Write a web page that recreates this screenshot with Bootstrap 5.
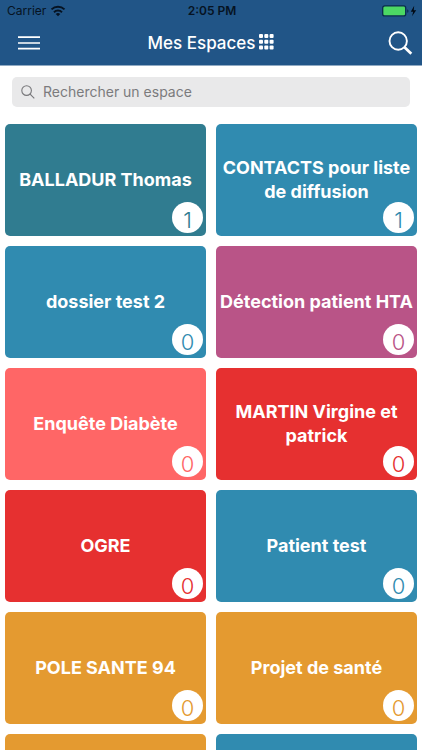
<!DOCTYPE html>
<html lang="fr">
<head>
<meta charset="utf-8">
<meta name="viewport" content="width=device-width, initial-scale=1">
<title>Mes Espaces</title>
<link href="https://cdn.jsdelivr.net/npm/bootstrap@5.3.0/dist/css/bootstrap.min.css" rel="stylesheet">
<style>
body { font-family: Inter, "Liberation Sans", sans-serif; }
svg { display: block; }
.app-header { background: #215587; border-bottom: 1px solid #90aac3; }
.status-bar { color: #061322; font-size: 12px; line-height: 16px; padding: 3px 5px 3px 7px; }
.status-bar > * { flex: 1 1 0; }
.title-bar { height: 43px; padding: 0 9px 1px; }
.title-bar > * { flex: 1 1 0; }
.title-bar > .app-title { flex: 0 0 auto; }
.app-title { font-size: 17px; line-height: 24px; }
.search-area { padding: 11px 12px 17px; }
.search-field { background: #e9e9ea; border-radius: 5px; height: 30px; padding: 0 9px; gap: 8px; }
.search-field input { font-size: 14px; line-height: 20px; color: #555; }
.search-field input::placeholder { color: #7b7b7d; opacity: 1; }
.space-list { scrollbar-width: none; }
.space-list::-webkit-scrollbar { display: none; }
.space-grid { display: grid; grid-template-columns: repeat(2, minmax(0, 1fr)); grid-auto-rows: 112px; gap: 10px; padding: 0 5px 10px; }
.space-tile { background: var(--tile); border: 0; border-radius: 5px; color: #fff; font-size: 18px; line-height: 24px; font-weight: 700; padding: 0 2px; }
.space-count { right: 3px; bottom: 3px; width: 31px; height: 31px; padding-top: 5px; color: var(--tile); font-size: 22px; line-height: 26px; font-weight: 300; }
.tile-teal { --tile: #307c90; }
.tile-blue { --tile: #308bb0; }
.tile-plum { --tile: #b95487; }
.tile-coral { --tile: #ff6666; }
.tile-red { --tile: #e63030; }
.tile-amber { --tile: #e49a30; }
</style>
</head>
<body>
<div class="d-flex flex-column vh-100 overflow-hidden bg-white">
  <header class="app-header flex-shrink-0">
    <div class="status-bar d-flex align-items-center">
      <div class="d-flex align-items-center gap-1">
        <span>Carrier</span>
        <svg width="16" height="12" viewBox="0 0 16 12" fill="none" stroke="currentColor" stroke-width="2" aria-hidden="true"><path d="M1.5 4.4a9.4 9.4 0 0 1 13 0M4 7.2a5.8 5.8 0 0 1 8 0"/><path d="M8 11.3 5.7 9.1a3.4 3.4 0 0 1 4.6 0z" fill="currentColor" stroke="none"/></svg>
      </div>
      <div class="text-center fw-semibold">2:05 PM</div>
      <div class="d-flex justify-content-end">
        <svg width="36" height="12" viewBox="0 0 36 12" aria-hidden="true"><rect x="1.7" y=".9" width="23" height="10" rx="2" fill="#4cd964" stroke="#0a2c4c" stroke-width="1.3"/><path d="M26.2 4.2q1.3.4 1.3 1.8t-1.3 1.8z" fill="#0a2c4c"/><path d="M33.2.8 29.8 6.8h2.4L31 11.2l4.2-6h-2.5z" fill="#020a14"/></svg>
      </div>
    </div>
    <div class="title-bar d-flex align-items-center">
      <div>
        <button type="button" class="btn d-block p-0 border-0 ms-2" aria-label="Menu">
          <svg width="23" height="14" viewBox="0 0 23 14" stroke="#fff" stroke-width="1.7"><path d="M1 1.2h22M1 7h22M1 12.6h22"/></svg>
        </button>
      </div>
      <div class="app-title d-flex align-items-center gap-1 text-white">
        <h1 class="app-title fw-medium m-0">Mes Espaces</h1>
        <svg width="15" height="19" viewBox="0 0 15 19" fill="#fff" aria-hidden="true"><rect width="4" height="4" rx="1"/><rect x="5.3" width="4" height="4" rx="1"/><rect x="10.6" width="4" height="4" rx="1"/><rect y="5.7" width="4" height="4" rx="1"/><rect x="5.3" y="5.7" width="4" height="4" rx="1"/><rect x="10.6" y="5.7" width="4" height="4" rx="1"/><rect y="11.4" width="4" height="4" rx="1"/><rect x="5.3" y="11.4" width="4" height="4" rx="1"/><rect x="10.6" y="11.4" width="4" height="4" rx="1"/></svg>
      </div>
      <div class="d-flex justify-content-end">
        <button type="button" class="btn d-block p-0 border-0" aria-label="Rechercher">
          <svg width="25" height="24" viewBox="0 0 25 24" fill="none" stroke="#fff"><circle cx="10.2" cy="10" r="8.7" stroke-width="1.9"/><path d="m16.5 16.2 6.8 6.6" stroke-width="2.8"/></svg>
        </button>
      </div>
    </div>
  </header>
  <main class="space-list flex-grow-1 overflow-auto">
    <div class="search-area">
      <label class="search-field d-flex align-items-center">
        <svg width="14" height="14" viewBox="0 0 14 14" fill="none" stroke="#77777a" stroke-width="1.1" aria-hidden="true"><circle cx="5.6" cy="5.6" r="4.8"/><path d="m9.1 9.1 4.2 4.2"/></svg>
        <input type="search" class="border-0 bg-transparent p-0 flex-grow-1" placeholder="Rechercher un espace" aria-label="Rechercher un espace">
      </label>
    </div>
    <div class="space-grid">
      <button type="button" class="space-tile tile-teal position-relative">BALLADUR Thomas<span class="space-count position-absolute rounded-circle bg-white">1</span></button>
      <button type="button" class="space-tile tile-blue position-relative">CONTACTS pour liste de diffusion<span class="space-count position-absolute rounded-circle bg-white">1</span></button>
      <button type="button" class="space-tile tile-blue position-relative">dossier test 2<span class="space-count position-absolute rounded-circle bg-white">0</span></button>
      <button type="button" class="space-tile tile-plum position-relative">Détection patient HTA<span class="space-count position-absolute rounded-circle bg-white">0</span></button>
      <button type="button" class="space-tile tile-coral position-relative">Enquête Diabète<span class="space-count position-absolute rounded-circle bg-white">0</span></button>
      <button type="button" class="space-tile tile-red position-relative">MARTIN Virgine et patrick<span class="space-count position-absolute rounded-circle bg-white">0</span></button>
      <button type="button" class="space-tile tile-red position-relative">OGRE<span class="space-count position-absolute rounded-circle bg-white">0</span></button>
      <button type="button" class="space-tile tile-blue position-relative">Patient test<span class="space-count position-absolute rounded-circle bg-white">0</span></button>
      <button type="button" class="space-tile tile-amber position-relative">POLE SANTE 94<span class="space-count position-absolute rounded-circle bg-white">0</span></button>
      <button type="button" class="space-tile tile-amber position-relative">Projet de santé<span class="space-count position-absolute rounded-circle bg-white">0</span></button>
      <button type="button" class="space-tile tile-amber position-relative" aria-label="Espace"></button>
      <button type="button" class="space-tile tile-blue position-relative" aria-label="Espace"></button>
    </div>
  </main>
</div>
<script src="https://cdn.jsdelivr.net/npm/bootstrap@5.3.0/dist/js/bootstrap.bundle.min.js"></script>
</body>
</html>
